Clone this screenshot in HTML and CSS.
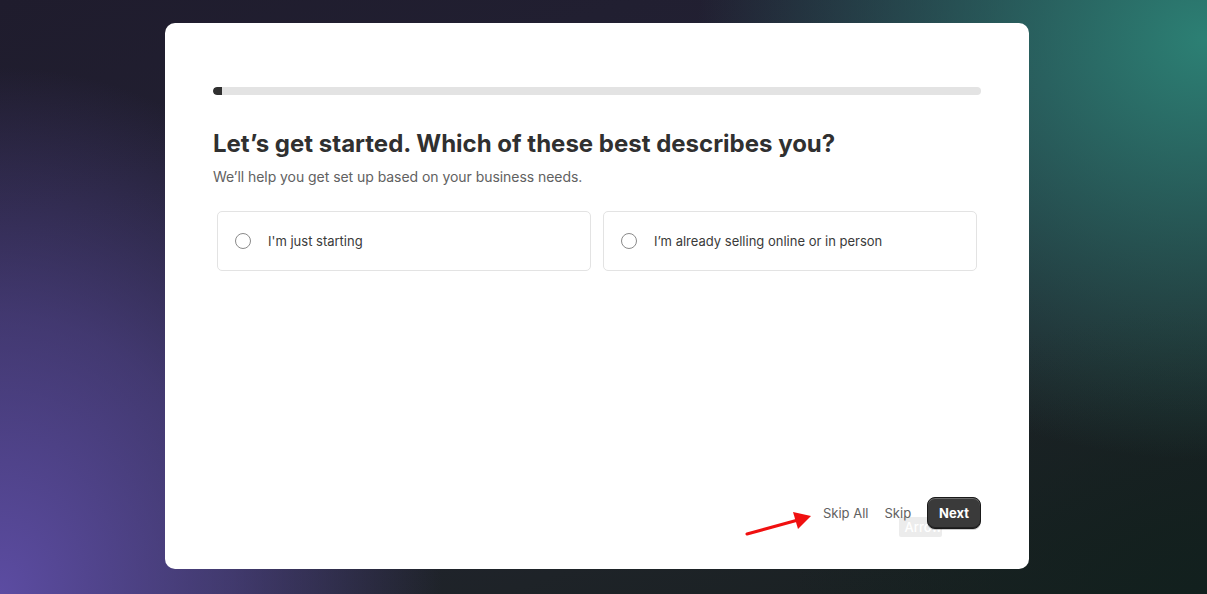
FILE: index.html
```html
<!DOCTYPE html>
<html lang="en">
<head>
<meta charset="utf-8">
<title>Let's get started</title>
<link rel="stylesheet" href="styles.css">
</head>
<body>
<div class="page">
  <main class="card">
    <div class="progress"><div class="progress-fill"></div></div>
    <h1 class="title">Let’s get started. Which of these best describes you?</h1>
    <p class="subtitle">We’ll help you get set up based on your business needs.</p>
    <div class="options">
      <label class="option"><span class="radio"></span><span class="option-text">I'm just starting</span></label>
      <label class="option"><span class="radio"></span><span class="option-text">I’m already selling online or in person</span></label>
    </div>
    <div class="footer">
      <button class="link-btn">Skip All</button>
      <span class="skip-wrap">
        <span class="tooltip">Arrow</span>
        <button class="link-btn skip-btn">Skip</button>
      </span>
      <button class="next-btn">Next</button>
      <svg class="annot" width="80" height="30" viewBox="0 0 80 30">
        <line x1="3" y1="26" x2="54" y2="12" stroke="#f01010" stroke-width="3" stroke-linecap="round"/>
        <polygon points="67,8 49,4 54,21" fill="#f01010"/>
      </svg>
    </div>
  </main>
</div>
</body>
</html>
```

FILE: styles.css
```css
* { box-sizing: border-box; }
html, body { margin: 0; padding: 0; }
body {
  font-family: Inter, "Noto Sans", "Liberation Sans", sans-serif;
  color: #303030;
}
.page {
  width: 1207px;
  height: 594px;
  padding: 23px 0 25px 165px;
  background:
    radial-gradient(ellipse 680px 560px at 1207px 40px, rgba(44,128,116,1), rgba(44,128,116,0) 75%),
    radial-gradient(ellipse 520px 620px at 0px 594px, rgba(92,76,162,1), rgba(92,76,162,0.55) 45%, rgba(92,76,162,0) 85%),
    radial-gradient(ellipse 520px 360px at 1207px 594px, rgba(18,32,30,1), rgba(18,32,30,0) 80%),
    linear-gradient(160deg, #1f1c2d 0%, #232235 45%, #1e2328 75%, #17201f 100%);
  overflow: hidden;
}
.card {
  width: 864px;
  height: 546px;
  background: #fff;
  border-radius: 10px;
  padding: 64px 48px 40px 48px;
  display: flex;
  flex-direction: column;
}
.progress {
  height: 8px;
  background: #e3e3e3;
  border-radius: 4px;
  overflow: hidden;
}
.progress-fill {
  width: 9px;
  height: 100%;
  background: #303030;
  border-radius: 4px 0 0 4px;
}
.title {
  margin: 33px 0 0 0;
  font-size: 24px;
  line-height: 32px;
  font-weight: 700;
  color: #303030;
  letter-spacing: 0;
}
.subtitle {
  margin: 7px 0 0 0;
  font-size: 14px;
  line-height: 20px;
  color: #616161;
  letter-spacing: -0.05px;
}
.options {
  margin-top: 24px;
  padding: 0 4px;
  display: grid;
  grid-template-columns: 1fr 1fr;
  gap: 12px;
}
.option {
  height: 60px;
  border: 1px solid #e3e3e3;
  border-radius: 5px;
  display: flex;
  align-items: center;
  padding: 0 17px;
  gap: 17px;
  cursor: pointer;
}
.radio {
  width: 16px;
  height: 16px;
  border: 1px solid #8a8a8a;
  border-radius: 50%;
  flex: none;
}
.option-text {
  font-size: 13px;
  color: #3a3a3a;
}
.footer {
  margin-top: auto;
  display: flex;
  justify-content: flex-end;
  align-items: center;
  gap: 16px;
  position: relative;
}
.link-btn {
  border: none;
  background: none;
  padding: 0;
  font-family: inherit;
  font-size: 13px;
  color: #616161;
  cursor: pointer;
}
.skip-wrap {
  position: relative;
  display: inline-flex;
}
.skip-btn {
  position: relative;
  z-index: 1;
}
.tooltip {
  position: absolute;
  left: 14px;
  top: 12px;
  width: 43px;
  height: 20px;
  background: #ececec;
  color: #fff;
  font-size: 13px;
  font-weight: 500;
  line-height: 20px;
  padding-left: 6px;
  overflow: hidden;
  white-space: nowrap;
  border-radius: 2px;
}
.next-btn {
  position: relative;
  z-index: 2;
  height: 32px;
  padding: 0 11px;
  border-radius: 8px;
  border: 1px solid #1a1a1a;
  background: #3a3a3a;
  box-shadow: inset 0 1px 0 rgba(255,255,255,0.25), inset 0 -1px 0 rgba(0,0,0,0.4), 0 1px 0 rgba(0,0,0,0.2);
  color: #fff;
  font-family: inherit;
  font-size: 13px;
  font-weight: 700;
  cursor: pointer;
}
.annot {
  position: absolute;
  left: 531px;
  top: 11px;
}
```
